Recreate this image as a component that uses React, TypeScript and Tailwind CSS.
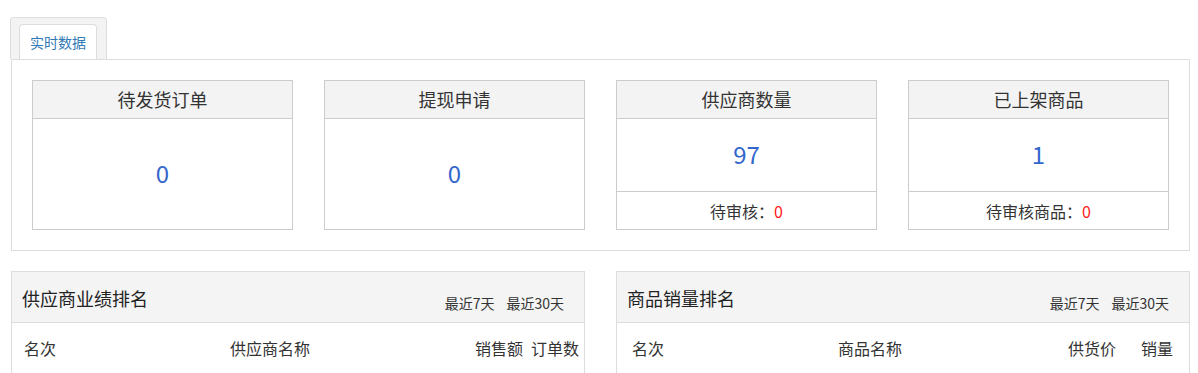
import React from 'react';

const FONT = { fontFamily: '"Noto Sans CJK SC", "Noto Sans", sans-serif' };

interface StatCardProps {
  title: string;
  value: string;
  footerLabel?: string;
  footerValue?: string;
}

function StatCard({ title, value, footerLabel, footerValue }: StatCardProps) {
  return (
    <div className="flex-1 border border-[#cccccc] flex flex-col h-[150px]">
      <div className="h-[38px] bg-[#f3f3f3] border-b border-[#cccccc] flex items-center justify-center text-[18px] text-[#333]">
        {title}
      </div>
      <div className="flex-1 flex items-center justify-center text-[24px] text-[#3366cc] pb-[3px]">{value}</div>
      {footerLabel && (
        <div className="h-[38px] border-t border-[#cccccc] flex items-center justify-center text-[16px] text-[#333]">
          {footerLabel}：<span className="text-[#ff1a1a]">{footerValue}</span>
        </div>
      )}
    </div>
  );
}

interface RankPanelProps {
  title: string;
  cols: string;
  firstPad: string;
  headers: string[];
}

function RankPanel({ title, cols, firstPad, headers }: RankPanelProps) {
  return (
    <div className="flex-1 border border-[#dddddd]">
      <div className="h-[51px] bg-[#f4f4f4] border-b border-[#dddddd] flex items-center justify-between pl-[10px] pr-[20px]">
        <span className="text-[18px] text-[#222] pt-[2px]">{title}</span>
        <div className="flex gap-[12px] text-[14px] text-[#333] pt-[12px]">
          <span>最近7天</span>
          <span>最近30天</span>
        </div>
      </div>
      <div className={`grid ${cols} h-[50px] items-center text-[16px] text-[#333] whitespace-nowrap`}>
        {headers.map((h, i) => (
          <div key={h} className={i === 0 ? firstPad : 'pl-3'}>
            {h}
          </div>
        ))}
      </div>
    </div>
  );
}

export default function App() {
  return (
    <div className="bg-white w-[1198px] h-[373px] overflow-hidden pl-[11px] pr-[8px] pt-[17px]" style={FONT}>
      <div className="flex">
        <div className="-ml-[1px] w-[97px] h-[42px] bg-[#f3f3f3] border border-b-0 border-[#dddddd] rounded-t-[4px] pl-[8px] pt-[6px] flex">
          <div className="w-[78px] h-[35px] bg-white border border-b-0 border-[#dddddd] rounded-t-[4px] flex items-center justify-center text-[14px] text-[#337ab7] pt-[1px]">
            实时数据
          </div>
        </div>
      </div>
      <div className="border border-[#dddddd] p-5 flex gap-[31px]">
        <StatCard title="待发货订单" value="0" />
        <StatCard title="提现申请" value="0" />
        <StatCard title="供应商数量" value="97" footerLabel="待审核" footerValue="0" />
        <StatCard title="已上架商品" value="1" footerLabel="待审核商品" footerValue="0" />
      </div>
      <div className="mt-5 flex gap-[31px]">
        <RankPanel
          title="供应商业绩排名"
          cols="grid-cols-[206px_245px_56px_1fr]"
          firstPad="pl-3"
          headers={['名次', '供应商名称', '销售额', '订单数']}
        />
        <RankPanel
          title="商品销量排名"
          cols="grid-cols-[209px_230px_73px_1fr]"
          firstPad="pl-[15px]"
          headers={['名次', '商品名称', '供货价', '销量']}
        />
      </div>
    </div>
  );
}
